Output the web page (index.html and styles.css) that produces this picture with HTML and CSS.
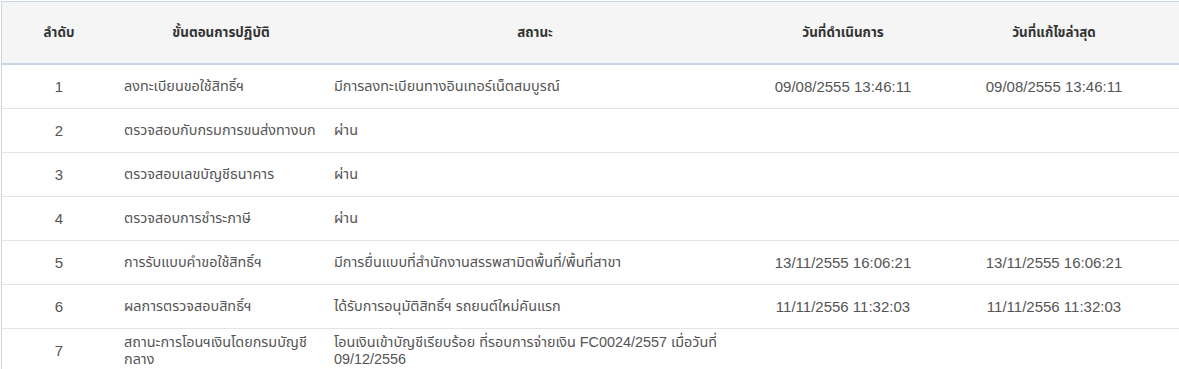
FILE: index.html
```html
<!DOCTYPE html>
<html lang="th">
<head>
<meta charset="utf-8">
<title>ขั้นตอนการปฏิบัติ</title>
<link rel="stylesheet" href="styles.css">
</head>
<body>
<div class="panel">
  <table class="steps">
    <colgroup>
      <col class="c-no">
      <col class="c-step">
      <col class="c-status">
      <col class="c-date">
      <col class="c-edit">
      <col class="c-rest">
    </colgroup>
    <thead>
      <tr>
        <th>ลำดับ</th>
        <th>ขั้นตอนการปฏิบัติ</th>
        <th>สถานะ</th>
        <th>วันที่ดำเนินการ</th>
        <th>วันที่แก้ไขล่าสุด</th>
        <th></th>
      </tr>
    </thead>
    <tbody>
      <tr>
        <td class="num">1</td>
        <td class="txt">ลงทะเบียนขอใช้สิทธิ์ฯ</td>
        <td class="txt">มีการลงทะเบียนทางอินเทอร์เน็ตสมบูรณ์</td>
        <td class="date">09/08/2555 13:46:11</td>
        <td class="date">09/08/2555 13:46:11</td>
        <td></td>
      </tr>
      <tr>
        <td class="num">2</td>
        <td class="txt">ตรวจสอบกับกรมการขนส่งทางบก</td>
        <td class="txt">ผ่าน</td>
        <td class="date"></td>
        <td class="date"></td>
        <td></td>
      </tr>
      <tr>
        <td class="num">3</td>
        <td class="txt">ตรวจสอบเลขบัญชีธนาคาร</td>
        <td class="txt">ผ่าน</td>
        <td class="date"></td>
        <td class="date"></td>
        <td></td>
      </tr>
      <tr>
        <td class="num">4</td>
        <td class="txt">ตรวจสอบการชำระภาษี</td>
        <td class="txt">ผ่าน</td>
        <td class="date"></td>
        <td class="date"></td>
        <td></td>
      </tr>
      <tr>
        <td class="num">5</td>
        <td class="txt">การรับแบบคำขอใช้สิทธิ์ฯ</td>
        <td class="txt">มีการยื่นแบบที่สำนักงานสรรพสามิตพื้นที่/พื้นที่สาขา</td>
        <td class="date">13/11/2555 16:06:21</td>
        <td class="date">13/11/2555 16:06:21</td>
        <td></td>
      </tr>
      <tr>
        <td class="num">6</td>
        <td class="txt">ผลการตรวจสอบสิทธิ์ฯ</td>
        <td class="txt">ได้รับการอนุมัติสิทธิ์ฯ รถยนต์ใหม่คันแรก</td>
        <td class="date">11/11/2556 11:32:03</td>
        <td class="date">11/11/2556 11:32:03</td>
        <td></td>
      </tr>
      <tr>
        <td class="num">7</td>
        <td class="txt">สถานะการโอนฯเงินโดยกรมบัญชีกลาง</td>
        <td class="txt">โอนเงินเข้าบัญชีเรียบร้อย ที่รอบการจ่ายเงิน FC0024/2557 เมื่อวันที่ 09/12/2556</td>
        <td class="date"></td>
        <td class="date"></td>
        <td></td>
      </tr>
    </tbody>
  </table>
</div>
</body>
</html>
```

FILE: styles.css
```css
html, body {
  margin: 0;
  padding: 0;
  background: #ffffff;
  overflow: hidden;
}

body {
  font-family: "Liberation Sans", Tahoma, "Noto Sans Thai", "DejaVu Sans", sans-serif;
  font-size: 15px;
  color: #555555;
}

.panel {
  margin-top: 1px;
  margin-left: 1px;
  width: 1200px;
  border-top: 1px solid #c9d6e1;
  border-left: 1px solid #c9d6e1;
}

.steps {
  width: 100%;
  border-collapse: collapse;
  table-layout: fixed;
}

.c-no { width: 114px; }
.c-step { width: 210px; }
.c-status { width: 418px; }
.c-date { width: 198px; }
.c-edit { width: 224px; }
.c-rest { width: auto; }

.steps thead th {
  background: #f5f5f5;
  color: #333333;
  font-weight: bold;
  font-size: 13.4px;
  text-align: center;
  height: 62px;
  padding: 0 8px;
  vertical-align: middle;
  border-bottom: 2px solid #c9d6e1;
  box-sizing: border-box;
}

.steps tbody td {
  padding: 0 8px;
  height: 43px;
  line-height: 17px;
  vertical-align: middle;
  border-top: 1px solid #e4e4e4;
  text-align: left;
}

.steps tbody tr:first-child td {
  border-top: none;
}

.steps tbody td.txt {
  font-size: 14.4px;
}

.steps tbody td.num,
.steps tbody td.date {
  text-align: center;
}
```
